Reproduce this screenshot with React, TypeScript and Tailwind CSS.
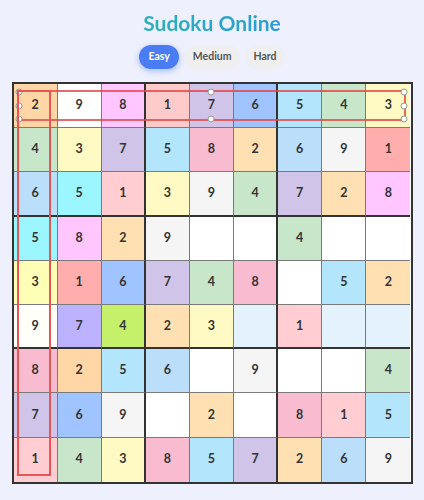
import { useState } from 'react'

type Cell = { v: number | null; c: string }

const W = '#ffffff'
const rows: [number | null, string][][] = [
  [[2, '#ffd6a5'], [9, W], [8, '#ffc6ff'], [1, '#ffcaca'], [7, '#d1c4e9'], [6, '#a0c4ff'], [5, '#b3e5fc'], [4, '#c8e6c9'], [3, '#fff9c4']],
  [[4, '#c8e6c9'], [3, '#fff9c4'], [7, '#d1c4e9'], [5, '#b3e5fc'], [8, '#f8bbd0'], [2, '#ffe0b2'], [6, '#bbdefb'], [9, '#f5f5f5'], [1, '#ffadad']],
  [[6, '#bbdefb'], [5, '#9bf6ff'], [1, '#ffcdd2'], [3, '#fff9c4'], [9, '#f5f5f5'], [4, '#c8e6c9'], [7, '#d1c4e9'], [2, '#ffe0b2'], [8, '#ffc6ff']],
  [[5, '#9bf6ff'], [8, '#ffc6ff'], [2, '#ffe0b2'], [9, '#f5f5f5'], [null, W], [null, W], [4, '#c8e6c9'], [null, W], [null, W]],
  [[3, '#fdffb6'], [1, '#ffadad'], [6, '#a0c4ff'], [7, '#d1c4e9'], [4, '#c8e6c9'], [8, '#f8bbd0'], [null, W], [5, '#b3e5fc'], [2, '#ffe0b2']],
  [[9, '#fffffa'], [7, '#bdb2ff'], [4, '#c5f06a'], [2, '#ffe0b2'], [3, '#fff9c4'], [null, '#e3f2fd'], [1, '#ffcdd2'], [null, '#e3f2fd'], [null, '#e3f2fd']],
  [[8, '#f8bbd0'], [2, '#ffd6a5'], [5, '#b3e5fc'], [6, '#bbdefb'], [null, W], [9, '#f5f5f5'], [null, W], [null, W], [4, '#c8e6c9']],
  [[7, '#d1c4e9'], [6, '#a0c4ff'], [9, '#f5f5f5'], [null, W], [2, '#ffe0b2'], [null, W], [8, '#f8bbd0'], [1, '#ffcdd2'], [5, '#b3e5fc']],
  [[1, '#ffcdd2'], [4, '#c8e6c9'], [3, '#fff9c4'], [8, '#f8bbd0'], [5, '#b3e5fc'], [7, '#d1c4e9'], [2, '#ffe0b2'], [6, '#bbdefb'], [9, '#f5f5f5']],
]

const board: Cell[][] = rows.map(r => r.map(([v, c]) => ({ v, c })))

function cellBorders(r: number, c: number) {
  const right = c === 8 ? '' : c === 2 || c === 5 ? 'border-r-2 border-r-[#333]' : 'border-r border-r-[#7a7a7a]'
  const bottom = r === 8 ? '' : r === 2 || r === 5 ? 'border-b-2 border-b-[#333]' : 'border-b border-b-[#7a7a7a]'
  return `${right} ${bottom}`
}

// resize handles of the row selection
const handles = [
  'left-0 top-0',
  'left-1/2 top-0',
  'left-full top-0',
  'left-0 top-1/2',
  'left-full top-1/2',
  'left-0 top-full',
  'left-1/2 top-full',
  'left-full top-full',
]

export default function App() {
  const [level, setLevel] = useState('Easy')

  return (
    <div className="min-h-screen bg-[#eef0fd] flex flex-col items-center pt-[9px]" style={{ fontFamily: 'Lato, "Noto Sans", sans-serif' }}>
      {/* Title */}
      <h1 className="text-[21px] leading-[28px] font-bold bg-gradient-to-r from-[#2fb0b8] to-[#2b9bd4] bg-clip-text text-transparent">
        Sudoku Online
      </h1>

      {/* Levels */}
      <div className="flex gap-[6px] mt-[8px]">
        {['Easy', 'Medium', 'Hard'].map(l => (
          <button
            key={l}
            onClick={() => setLevel(l)}
            className={
              level === l
                ? 'h-[24px] px-[9px] rounded-full bg-[#4a7cf6] text-white text-[10.5px] font-bold shadow-[0_2px_6px_rgba(74,124,246,0.45)]'
                : 'h-[24px] px-[8px] rounded-full bg-[#efefef] text-[#555] text-[10.5px] font-bold'
            }
          >
            {l}
          </button>
        ))}
      </div>

      {/* Board */}
      <div className="relative mt-[13px]">
        <div className="w-[401px] grid grid-cols-9 border-2 border-[#333] bg-white">
          {board.map((row, r) =>
            row.map((cell, c) => (
              <div
                key={`${r}-${c}`}
                className={`h-[44.2px] flex items-center justify-center text-[12.5px] font-bold text-[#333] ${cellBorders(r, c)}`}
                style={{ backgroundColor: cell.c }}
              >
                {cell.v ?? ''}
              </div>
            ))
          )}
        </div>

        {/* selection overlays */}
        <div className="absolute left-[5px] top-[8px] w-[389px] h-[31px] border-2 border-[rgba(226,70,70,0.8)] pointer-events-none">
          {handles.map(h => (
            <span key={h} className={`absolute ${h} w-[7px] h-[7px] rounded-full bg-white border border-[#999] -translate-x-1/2 -translate-y-1/2`} />
          ))}
        </div>
        <div className="absolute left-[5px] top-[8px] w-[34px] h-[386px] border-2 border-[#e85555] pointer-events-none" />
      </div>
    </div>
  )
}
